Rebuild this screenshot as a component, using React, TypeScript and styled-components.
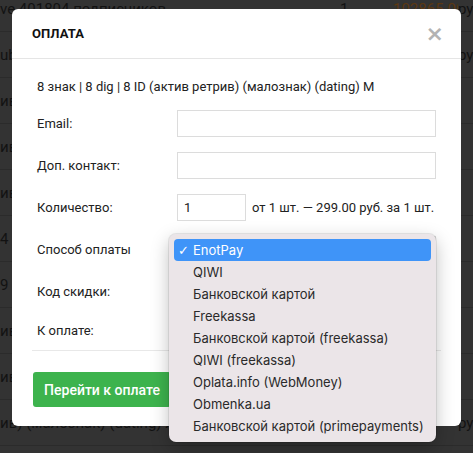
import React from "react";
import styled, { createGlobalStyle } from "styled-components";

const GlobalStyle = createGlobalStyle`
    * { box-sizing: border-box; }
    body {
        margin: 0;
        background: #333333;
        font-family: Roboto, "Noto Sans", Arial, sans-serif;
        overflow: hidden;
    }
`;

const Page = styled.div`
    position: relative;
    width: 473px;
    height: 453px;
    overflow: hidden;
    background: #333333;
`;

const BgTable = styled.div`
    margin-top: -14px;
`;

const BgRow = styled.div`
    display: grid;
    grid-template-columns: 340px 53px 65px 1fr;
    align-items: center;
    height: 46px;
    border-bottom: 1px solid #2b2b2b;
    color: #121212;
    font-size: 15px;
    white-space: nowrap;
    overflow: hidden;
`;

const BgCell = styled.span<{ $orange?: boolean }>`
    overflow: hidden;
    color: ${(p) => (p.$orange ? "#5c3812" : "#121212")};
`;

const Overlay = styled.div`
    position: absolute;
    inset: 0;
    padding: 9px 12px;
`;

const Modal = styled.div`
    width: 449px;
    background: #fff;
    border-radius: 6px;
    color: #222;
`;

const Header = styled.div`
    display: flex;
    align-items: center;
    justify-content: space-between;
    height: 50px;
    padding: 0 20px;
    border-bottom: 1px solid #e5e5e5;
`;

const Title = styled.h4`
    margin: 0;
    font-size: 13px;
    font-weight: 700;
    color: #111;
    letter-spacing: 0.1px;
`;

const Close = styled.span`
    font-family: "DejaVu Sans", sans-serif;
    font-size: 22px;
    font-weight: 700;
    color: #b3b3b3;
    line-height: 1;
    margin-right: -3px;
`;

const Body = styled.div`
    padding: 18px 20px 0;
`;

const Desc = styled.div`
    padding: 0 5px;
    font-size: 13px;
    line-height: 20px;
    margin-bottom: 13px;
`;

const Row = styled.div<{ $flat?: boolean }>`
    display: flex;
    align-items: center;
    height: ${(p) => (p.$flat ? "20px" : "27px")};
    margin-bottom: 15px;
    padding: 0 5px;
    font-size: 13px;
`;

const Label = styled.div`
    width: 140px;
    flex-shrink: 0;
`;

const Input = styled.div<{ $w?: number }>`
    width: ${(p) => (p.$w ? `${p.$w}px` : "259px")};
    height: 27px;
    border: 1px solid #dcdcdc;
    padding: 0 6px;
    display: flex;
    align-items: center;
    font-size: 13px;
`;

const Hint = styled.span`
    margin-left: 6px;
    white-space: nowrap;
`;

const Divider = styled.div`
    margin-top: -5px;
    border-bottom: 1px solid #e8e8e8;
`;

const Footer = styled.div`
    padding: 21px 20px 19px;
`;

const Button = styled.button`
    height: 35px;
    width: 138px;
    margin-left: 1px;
    border: none;
    border-radius: 3px;
    background: #3db34d;
    color: #fff;
    font-family: Roboto, sans-serif;
    font-size: 14px;
    font-weight: 500;
`;

const Dropdown = styled.div`
    position: absolute;
    left: 169px;
    top: 234px;
    width: 267px;
    padding: 5px;
    background: #ebe5e8;
    border-radius: 7px;
    box-shadow: 0 0 0 1px rgba(0, 0, 0, 0.08), 0 6px 18px rgba(0, 0, 0, 0.25);
    font-family: Inter, "Noto Sans", sans-serif;
    font-size: 13px;
    color: #2a2a2a;
`;

const Option = styled.div<{ $active?: boolean }>`
    display: flex;
    align-items: center;
    height: 22px;
    padding-left: 4px;
    border-radius: 4px;
    background: ${(p) => (p.$active ? "#3f94f8" : "transparent")};
    color: ${(p) => (p.$active ? "#fff" : "#2a2a2a")};
    white-space: nowrap;
`;

const Check = styled.span`
    width: 15px;
    flex-shrink: 0;
    font-family: "DejaVu Sans", sans-serif;
    font-size: 13px;
`;

const bgRows = [
    ["ve 401804 подписчиков", "1", "102865.00", "ру"],
    ["ub", "", "", "ру"],
    ["ив)", "", "", ""],
    ["ив)", "", "", ""],
    ["ив)", "", "", ""],
    ["4", "", "", ""],
    ["9", "", "", ""],
    ["ив)", "", "", ""],
    ["ив)", "", "", ""],
    ["ив) (малознак) (dating) Ж 10", "", "", "руб."],
];

const options = [
    "EnotPay",
    "QIWI",
    "Банковской картой",
    "Freekassa",
    "Банковской картой (freekassa)",
    "QIWI (freekassa)",
    "Oplata.info (WebMoney)",
    "Obmenka.ua",
    "Банковской картой (primepayments)",
];

export default function App() {
    return (
        <>
            <GlobalStyle />
            <Page>
                <BgTable>
                    {bgRows.map((r, i) => (
                        <BgRow key={i}>
                            <BgCell>{r[0]}</BgCell>
                            <BgCell>{r[1]}</BgCell>
                            <BgCell $orange>{r[2]}</BgCell>
                            <BgCell>{r[3]}</BgCell>
                        </BgRow>
                    ))}
                </BgTable>
                <Overlay>
                    <Modal>
                        <Header>
                            <Title>ОПЛАТА</Title>
                            <Close>×</Close>
                        </Header>
                        <Body>
                            <Desc>8 знак | 8 dig | 8 ID (актив ретрив) (малознак) (dating) M</Desc>
                            <Row>
                                <Label>Email:</Label>
                                <Input />
                            </Row>
                            <Row>
                                <Label>Доп. контакт:</Label>
                                <Input />
                            </Row>
                            <Row>
                                <Label>Количество:</Label>
                                <Input $w={69}>1</Input>
                                <Hint>от 1 шт. — 299.00 руб. за 1 шт.</Hint>
                            </Row>
                            <Row>
                                <Label>Способ оплаты</Label>
                                <Input />
                            </Row>
                            <Row>
                                <Label>Код скидки:</Label>
                                <Input />
                            </Row>
                            <Row $flat>
                                <Label>К оплате:</Label>
                            </Row>
                            <Divider />
                        </Body>
                        <Footer>
                            <Button>Перейти к оплате</Button>
                        </Footer>
                    </Modal>
                </Overlay>
                <Dropdown>
                    {options.map((o, i) => (
                        <Option key={o} $active={i === 0}>
                            <Check>{i === 0 ? "✓" : ""}</Check>
                            {o}
                        </Option>
                    ))}
                </Dropdown>
            </Page>
        </>
    );
}
